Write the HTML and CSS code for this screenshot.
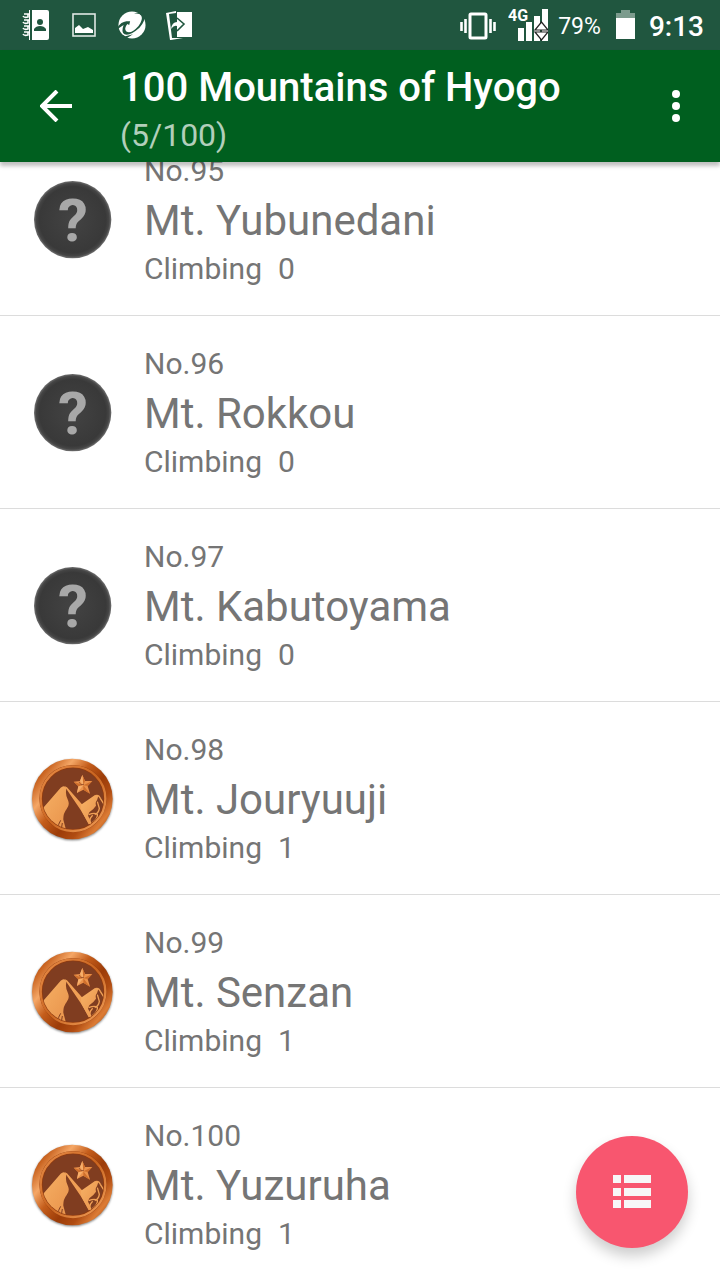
FILE: index.html
```
<!DOCTYPE html>
<html lang="en">
<head>
    <meta charset="UTF-8">
    <meta name="viewport" content="width=device-width, initial-scale=1.0">
    <title>100 Mountains of Hyogo</title>
    <link rel="stylesheet" href="styles.css">
</head>
<body>
  <!-- shared badge drawings -->
  <svg class="defs" width="0" height="0" aria-hidden="true">
    <defs>
      <radialGradient id="dark">
        <stop offset="0" stop-color="#434343"/>
        <stop offset="0.86" stop-color="#393939"/>
        <stop offset="0.94" stop-color="#454545"/>
        <stop offset="1" stop-color="#707070"/>
      </radialGradient>
      <linearGradient id="rim" x1="0" y1="0.1" x2="1" y2="0.9">
        <stop offset="0" stop-color="#b5591c"/>
        <stop offset="0.12" stop-color="#c8621f"/>
        <stop offset="0.27" stop-color="#f5a766"/>
        <stop offset="0.42" stop-color="#c45d1b"/>
        <stop offset="0.6" stop-color="#9c3c08"/>
        <stop offset="0.74" stop-color="#b04c12"/>
        <stop offset="0.86" stop-color="#dc7c35"/>
        <stop offset="1" stop-color="#a34208"/>
      </linearGradient>
      <linearGradient id="ring" x1="0" y1="0" x2="1" y2="1">
        <stop offset="0" stop-color="#e98f4a"/>
        <stop offset="0.5" stop-color="#c9641f"/>
        <stop offset="1" stop-color="#f3a25c"/>
      </linearGradient>
      <linearGradient id="peak" x1="0" y1="0" x2="1" y2="1">
        <stop offset="0" stop-color="#f7b266"/>
        <stop offset="1" stop-color="#e8924a"/>
      </linearGradient>
      <clipPath id="face"><circle cx="159" cy="159" r="92"/></clipPath>
    </defs>
    <symbol id="unknown" viewBox="30 24 252 252">
      <circle cx="158" cy="149" r="116" fill="url(#dark)"/>
      <text x="159" y="212" text-anchor="middle" class="mark">?</text>
    </symbol>
    <symbol id="medal" viewBox="30 34 252 252">
      <circle cx="157" cy="160" r="121" fill="url(#rim)"/>
      <circle cx="159" cy="159" r="101" fill="#8f3a0e"/>
      <circle cx="159" cy="159" r="97" fill="none" stroke="url(#ring)" stroke-width="7"/>
      <g clip-path="url(#face)">
        <circle cx="159" cy="159" r="92" fill="#803d20"/>
        <path d="M58 200L122 126Q131 117 139 126L138 138Q137 150 144 164Q150 178 140 190Q129 204 130 222L138 252H58Z" fill="url(#peak)"/>
        <path d="M133 121L141 125L188 178L216 234H206L182 193Z" fill="#f0a055"/>
        <path d="M183 177L225 148L235 151L231 164Q225 169 228 180Q220 192 208 200Q202 208 204 222L214 236H206L184 194Z" fill="url(#peak)"/>
        <path d="M226 150Q236 146 241 158L257 184M232 168L238 188Q236 202 224 207M206 207Q224 200 232 206Q234 218 218 230M218 209Q210 216 209 226" fill="none" stroke="#f0a055" stroke-width="4"/>
        <path d="M122 224Q113 235 116 250M127 232L124 250" fill="none" stroke="#803d20" stroke-width="3"/>
      </g>
      <path d="M187 88L195 106L217 106L203 121L210 144L190 132L171 142L175 122L161 108L180 106Z" fill="#eb924b"/>
      <path d="M187 88L190 119L195 106ZM190 119L217 106L203 121ZM190 119L210 144L190 132ZM190 119L161 108L175 122Z" fill="#cf6f2c"/>
      <path d="M190 119L187 88L180 106ZM190 119L175 122L171 142Z" fill="#f7b06c"/>
      <path d="M177 109L183 117L192 116" fill="none" stroke="#803d20" stroke-width="2"/>
    </symbol>
  </svg>

  <div class="screen">
    <div class="status">
      <div class="notices">
        <svg width="28" height="32" viewBox="0 0 28 32">
          <path d="M7 1H8V31H7ZM10 1H25Q27 1 27 3V29Q27 31 25 31H10Z" fill="#fff"/>
          <circle cx="18" cy="13" r="3" fill="#20563f"/>
          <path d="M12 22V20Q14 17 18 17T24 20V22Z" fill="#20563f"/>
          <path d="M7 5H2M1 7Q2 9 6 8V5M7 11H2M1 13Q2 15 6 14V11M7 17H2M1 19Q2 21 6 20V17M7 23H2M1 25Q2 27 6 26V23" fill="none" stroke="#fff" stroke-width="1.6"/>
        </svg>
        <svg width="28" height="32" viewBox="0 0 28 32">
          <rect x="3" y="5" width="22" height="22" fill="none" stroke="#dfe8e4" stroke-width="1.6"/>
          <path d="M5 24V19L9 16L13 20L18 18L23 21V24Z" fill="#fff"/>
        </svg>
        <svg width="28" height="32" viewBox="0 0 30 32">
          <circle cx="15" cy="16" r="14.500" fill="#fff"/>
          <path d="M0 18Q3 13 9 12L13 12L12 16L10 15Q6 20 9 23Q14 26 22 17Q27 10 25 6Q23 3 17 4Q25 1 28 5Q30 11 23 19Q13 28 7 26Q3 24 6 16L0 20Z" fill="#20563f"/>
          <path d="M2 25L8 28L16 26L8 31H3Z" fill="#20563f"/>
        </svg>
        <svg width="28" height="32" viewBox="0 0 28 32">
          <path d="M11 3H26V28H11Z" fill="#fff"/>
          <path d="M0 4L10 2V4L3 5L6 29L17 29L5 31H4Z" fill="#fff"/>
          <path d="M5 20Q6 13 11 13V9L18 15L11 22V17Q8 16 5 20Z" fill="#fff"/>
          <path d="M11 9L18 15L11 22" fill="none" stroke="#20563f" stroke-width="1.6"/>
        </svg>
      </div>
      <div class="system">
        <svg width="36" height="32" viewBox="0 0 36 32">
          <rect x="10" y="5" width="16" height="24" rx="1" fill="none" stroke="#fff" stroke-width="3"/>
          <path d="M5.500 10V24M30.500 10V24M1.500 13V22M34.500 13V22" stroke="#fff" stroke-width="2.600"/>
        </svg>
        <svg class="signal" width="40" height="36" viewBox="0 0 40 36">
          <text x="0" y="14" class="net">4G</text>
          <path d="M10 21H16V34H10ZM18 15H24V34H18ZM26 9H32V34H26ZM34 2H40V34H34Z" fill="#fff"/>
          <path d="M27 23L33.500 15L40 23ZM27 25L33.500 33L40 25Z" fill="#fff" stroke="#222" stroke-width="1.200"/>
        </svg>
        <span class="percent">79%</span>
        <svg class="battery" width="20" height="32" viewBox="0 0 20 32">
          <path d="M6 1H15V4H20V9H1V4H6Z" fill="#7c9b8d"/>
          <path d="M1 9H20V30H1Z" fill="#fff"/>
        </svg>
        <span class="clock">9:13</span>
      </div>
    </div>

    <header class="appbar">
      <button class="icon-btn" type="button" aria-label="Back">
        <svg width="32" height="32" viewBox="0 0 32 32">
          <path d="M32 16H3M17 1L2 16L17 31" fill="none" stroke="#fff" stroke-width="4"/>
        </svg>
      </button>
      <div class="titles">
        <h1>100 Mountains of Hyogo</h1>
        <p>(5/100)</p>
      </div>
      <button class="icon-btn more" type="button" aria-label="More options">
        <svg width="8" height="32" viewBox="0 0 8 32">
          <circle cx="4" cy="4" r="4" fill="#fff"/>
          <circle cx="4" cy="16" r="4" fill="#fff"/>
          <circle cx="4" cy="28" r="4" fill="#fff"/>
        </svg>
      </button>
    </header>

    <!-- list is kept at its end -->
    <ul class="list">
      <li class="row">
        <svg class="badge"><use href="#unknown"/></svg>
        <div class="info">
          <p>No.95</p>
          <h2>Mt. Yubunedani</h2>
          <p class="climb"><span>Climbing</span><span>0</span></p>
        </div>
      </li>
      <li class="row">
        <svg class="badge"><use href="#unknown"/></svg>
        <div class="info">
          <p>No.96</p>
          <h2>Mt. Rokkou</h2>
          <p class="climb"><span>Climbing</span><span>0</span></p>
        </div>
      </li>
      <li class="row">
        <svg class="badge"><use href="#unknown"/></svg>
        <div class="info">
          <p>No.97</p>
          <h2>Mt. Kabutoyama</h2>
          <p class="climb"><span>Climbing</span><span>0</span></p>
        </div>
      </li>
      <li class="row">
        <svg class="badge medal"><use href="#medal"/></svg>
        <div class="info">
          <p>No.98</p>
          <h2>Mt. Jouryuuji</h2>
          <p class="climb"><span>Climbing</span><span>1</span></p>
        </div>
      </li>
      <li class="row">
        <svg class="badge medal"><use href="#medal"/></svg>
        <div class="info">
          <p>No.99</p>
          <h2>Mt. Senzan</h2>
          <p class="climb"><span>Climbing</span><span>1</span></p>
        </div>
      </li>
      <li class="row">
        <svg class="badge medal"><use href="#medal"/></svg>
        <div class="info">
          <p>No.100</p>
          <h2>Mt. Yuzuruha</h2>
          <p class="climb"><span>Climbing</span><span>1</span></p>
        </div>
      </li>
    </ul>

    <button class="fab" type="button" aria-label="Show list">
      <svg width="40" height="34" viewBox="0 0 40 34">
        <path d="M1 0H9V8H1ZM12 0H39V8H12ZM1 13H9V21H1ZM12 13H39V21H12ZM1 25H9V33H1ZM12 25H39V33H12Z" fill="#f7f7f7"/>
      </svg>
    </button>
  </div>
</body>
</html>
```
FILE: styles.css
```
*{
    margin: 0;
    padding: 0;
    box-sizing: border-box;
}
body{
    font-family: Roboto, sans-serif;
    background: white;
    color: #757575;
}
.defs{
    position: absolute;
}
.screen{
    height: 100vh;
    display: flex;
    flex-direction: column;
    overflow: hidden;
}
.status{
    flex: none;
    height: 50px;
    padding: 0 16px 0 22px;
    background: #20563f;
    color: white;
    display: flex;
    justify-content: space-between;
    align-items: center;
}
.notices{
    display: flex;
    align-items: center;
    gap: 20px;
}
.system{
    display: flex;
    align-items: center;
    gap: 10px;
}
.signal{
    margin-left: 2px;
}
.battery{
    margin: 0 4px;
}
.net{
    font-size: 16px;
    font-weight: 700;
    fill: white;
}
.percent{
    font-size: 23px;
    padding-top: 2px;
}
.clock{
    font-size: 28px;
    font-weight: 500;
    padding-top: 2px;
}
.appbar{
    flex: none;
    position: relative;
    z-index: 1;
    height: 112px;
    background: #005f1f;
    color: white;
    display: flex;
    align-items: center;
    box-shadow: 0 4px 4px rgba(0,0,0,0.25);
}
.icon-btn{
    width: 112px;
    height: 112px;
    border: none;
    background: none;
    display: flex;
    justify-content: center;
    align-items: center;
    cursor: pointer;
}
.more{
    width: 88px;
}
.titles{
    flex: 1;
    padding: 10px 0 0 8px;
}
.titles h1{
    font-size: 40px;
    line-height: 48px;
    font-weight: 500;
}
.titles p{
    font-size: 32px;
    line-height: 46px;
    color: #b2cfbb;
}
.list{
    flex: 1;
    min-height: 0;
    list-style: none;
    display: flex;
    flex-direction: column;
    justify-content: flex-end;
}
.row{
    flex: none;
    padding: 30px 30px 28px;
    display: flex;
    align-items: center;
    gap: 30px;
    border-bottom: 1px solid #dcdcdc;
}
.row:last-child{
    border-bottom: none;
}
.badge{
    width: 84px;
    height: 84px;
    flex: none;
}
.medal{
    filter: drop-shadow(0 1px 1px rgba(0,0,0,0.5));
}
.mark{
    font-family: Roboto, sans-serif;
    font-size: 180px;
    font-weight: 700;
    fill: #a8a8a8;
}
.info p{
    font-size: 30px;
    line-height: 36px;
}
.info h2{
    font-size: 42px;
    line-height: 50px;
    font-weight: 400;
    margin: 7px 0 5px;
}
.info .climb{
    display: flex;
    gap: 16px;
}
.fab{
    position: fixed;
    right: 32px;
    bottom: 32px;
    width: 112px;
    height: 112px;
    border: none;
    border-radius: 50%;
    background: #f8566f;
    box-shadow: 0 8px 14px rgba(0,0,0,0.2);
    display: flex;
    justify-content: center;
    align-items: center;
    cursor: pointer;
}
```
